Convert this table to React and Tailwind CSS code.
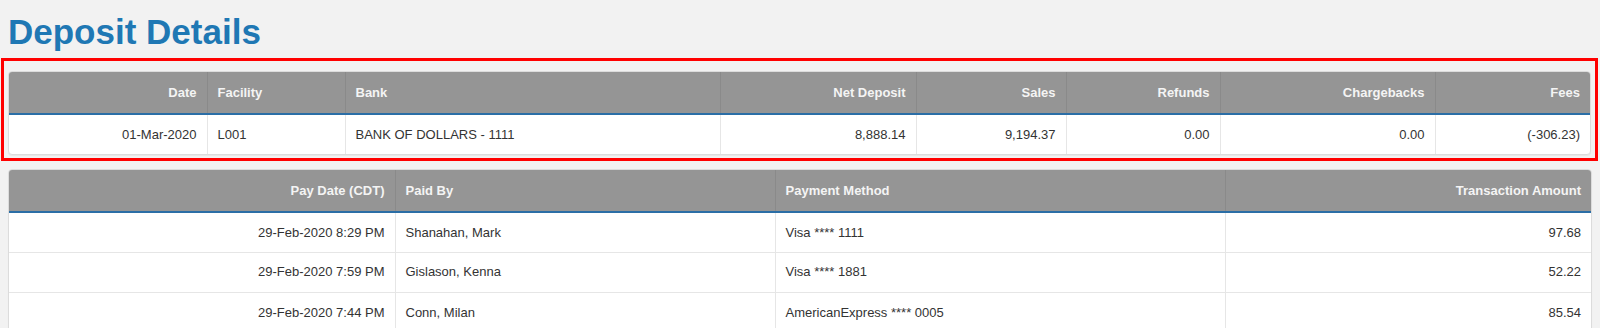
import React from "react";

const summaryCols = [
  { label: "Date", w: "w-[198px]", align: "text-right" },
  { label: "Facility", w: "w-[138px]", align: "text-left" },
  { label: "Bank", w: "w-[375px]", align: "text-left" },
  { label: "Net Deposit", w: "w-[196px]", align: "text-right" },
  { label: "Sales", w: "w-[150px]", align: "text-right" },
  { label: "Refunds", w: "w-[154px]", align: "text-right" },
  { label: "Chargebacks", w: "w-[215px]", align: "text-right" },
  { label: "Fees", w: "", align: "text-right" },
];

const summaryRows = [
  ["01-Mar-2020", "L001", "BANK OF DOLLARS - 1111", "8,888.14", "9,194.37", "0.00", "0.00", "(-306.23)"],
];

const txCols = [
  { label: "Pay Date (CDT)", w: "w-[386px]", align: "text-right" },
  { label: "Paid By", w: "w-[380px]", align: "text-left" },
  { label: "Payment Method", w: "w-[450px]", align: "text-left" },
  { label: "Transaction Amount", w: "", align: "text-right" },
];

const txRows = [
  ["29-Feb-2020 8:29 PM", "Shanahan, Mark", "Visa **** 1111", "97.68"],
  ["29-Feb-2020 7:59 PM", "Gislason, Kenna", "Visa **** 1881", "52.22"],
  ["29-Feb-2020 7:44 PM", "Conn, Milan", "AmericanExpress **** 0005", "85.54"],
];

function DataTable({ cols, rows, rowHeight }) {
  return (
    <div className="bg-white border border-[#dcdcdc] rounded-[4px] overflow-hidden shadow-[0_1px_1px_rgba(0,0,0,0.05)]">
      <table className="w-full table-fixed border-collapse text-[13px]">
        <colgroup>
          {cols.map((c) => (
            <col key={c.label} className={c.w} />
          ))}
        </colgroup>
        <thead>
          <tr className="h-[42px] bg-[#959595] border-b-2 border-[#2b6ea6]">
            {cols.map((c, i) => (
              <th
                key={c.label}
                className={`${c.align} px-[10px] font-bold text-[#f4f4f4] align-middle ${
                  i > 0 ? "border-l border-[#8a8a8a]" : ""
                }`}
              >
                {c.label}
              </th>
            ))}
          </tr>
        </thead>
        <tbody>
          {rows.map((r, ri) => (
            <tr
              key={ri}
              className={`${rowHeight} ${ri < rows.length - 1 ? "border-b border-[#e6e6e6]" : ""}`}
            >
              {r.map((v, i) => (
                <td
                  key={i}
                  className={`${cols[i].align} px-[10px] text-[#333333] align-middle ${
                    i > 0 ? "border-l border-[#e6e6e6]" : ""
                  }`}
                >
                  {v}
                </td>
              ))}
            </tr>
          ))}
        </tbody>
      </table>
    </div>
  );
}

export default function App() {
  return (
    <div className="min-h-screen bg-[#f2f2f2] font-['Liberation_Sans',Arial,sans-serif] overflow-hidden">
      <h1 className="pt-[12px] pl-[8px] text-[35px] leading-[40px] font-bold text-[#1f78b4]">
        Deposit Details
      </h1>
      <div className="mt-[6px] ml-[1px] mr-[2px] border-[3px] border-[#ff0000] pt-[10px] px-[4px] pb-[3px]">
        <DataTable cols={summaryCols} rows={summaryRows} rowHeight="h-[40px]" />
      </div>
      <div className="mt-[8px] px-[8px]">
        <DataTable cols={txCols} rows={txRows} rowHeight="h-[40px]" />
      </div>
    </div>
  );
}
